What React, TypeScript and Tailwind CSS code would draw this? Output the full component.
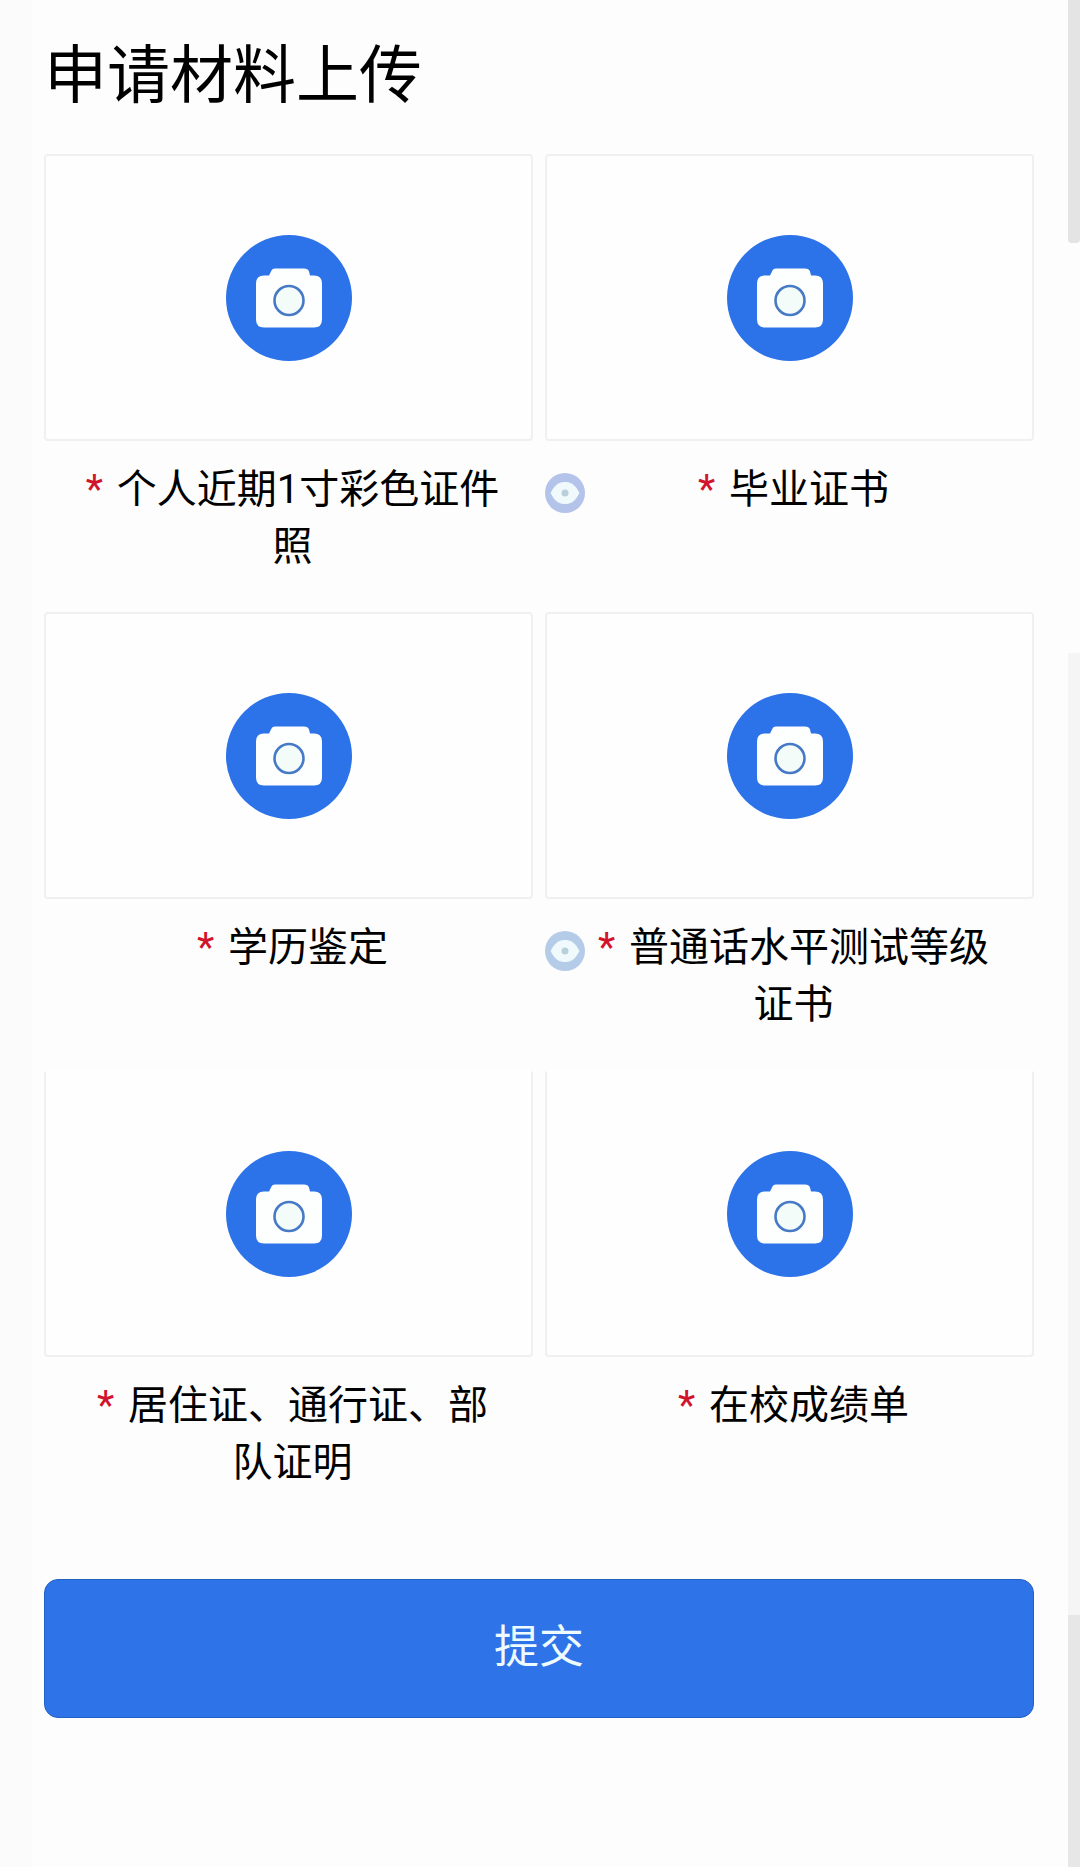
import React from 'react';

type Material = { id: string; name: string; preview?: 'violet' | 'blue' };

const rows: Material[][] = [
  [
    { id: 'photo', name: '个人近期1寸彩色证件照' },
    { id: 'diploma', name: '毕业证书', preview: 'violet' },
  ],
  [
    { id: 'education', name: '学历鉴定' },
    { id: 'mandarin', name: '普通话水平测试等级证书', preview: 'blue' },
  ],
  [
    { id: 'residence', name: '居住证、通行证、部队证明' },
    { id: 'transcript', name: '在校成绩单' },
  ],
];

function CameraIcon() {
  return (
    <svg viewBox="0 0 126 126" className="size-[126px]" aria-hidden="true">
      <circle cx="63" cy="63" r="63" fill="#2c72e8" />
      <path
        d="M49 33.500h29q4 0 5 3l1 4h4q8 0 8 8v36q0 8-8 8H38q-8 0-8-8V48.500q0-8 8-8h5l2-4q1-3 4-3z"
        fill="#fdfefe"
      />
      <circle cx="63" cy="65.500" r="14.500" fill="#f3fcf9" stroke="#4679c6" strokeWidth="2.600" />
    </svg>
  );
}

function EyeIcon({ tone }: { tone: 'violet' | 'blue' }) {
  return (
    <svg viewBox="0 0 40 40" className="size-10" aria-hidden="true">
      <circle cx="20" cy="20" r="20" fill={tone === 'violet' ? '#b4c3ea' : '#b5cce9'} />
      <path d="M6 20C9 15 11 9.500 20 9.500S31 15 34 20c-3 5-5 10.500-14 10.500S9 25 6 20z" fill="#f0fafd" stroke="#f0fafd" strokeLinejoin="round" />
      <circle cx="20" cy="20" r="3.500" fill="#b9cfda" />
    </svg>
  );
}

function UploadItem({ item, openTop }: { item: Material; openTop: boolean }) {
  return (
    <div className="relative">
      <input id={item.id} type="file" accept="image/*" className="sr-only" />
      <label
        htmlFor={item.id}
        aria-label={`上传${item.name}`}
        className={`flex h-[287px] cursor-pointer items-center justify-center rounded-sm border-2 bg-[#fefefe] ${
          openTop ? 'border-[#f0f0f0] border-t-transparent' : 'border-[#f0f0f0]'
        }`}
      >
        <CameraIcon />
      </label>
      <div className="relative mt-5 min-h-[114px] pr-[30px] pl-[38px] text-center text-[40px] leading-[57px]">
        {item.preview && (
          <button type="button" aria-label={`查看${item.name}示例`} className="absolute top-3 left-0 size-10">
            <EyeIcon tone={item.preview} />
          </button>
        )}
        <label htmlFor={item.id}>
          <span className="mr-1 text-[#d0142c]">*</span> {item.name}
        </label>
      </div>
    </div>
  );
}

export default function App() {
  return (
    <div className="flex min-h-screen bg-[#fbfbfb] pl-8 font-[Roboto,'Noto_Sans_CJK_SC',sans-serif] text-black">
      <main className="min-w-0 flex-1 bg-[#fdfdfd] pt-8 pr-[34px] pb-[148px] pl-3">
        <h1 className="text-[63px] leading-[88px]">申请材料上传</h1>
        <form onSubmit={(e) => e.preventDefault()} className="mt-[34px]">
          <div className="flex flex-col gap-[37px]">
            {rows.map((row, i) => (
              <div key={row[0].id} className="grid grid-cols-2 gap-3">
                {row.map((item) => (
                  <UploadItem key={item.id} item={item} openTop={i === 2} />
                ))}
              </div>
            ))}
          </div>
          <button
            type="submit"
            className="mt-[88px] h-[139px] w-full rounded-[14px] border border-[#2460c0] bg-[#2f73e8] pb-0.5 text-[45px] text-[#eefbff]"
          >
            提交
          </button>
        </form>
      </main>
      <div className="flex w-3 flex-col" aria-hidden="true">
        <div className="h-[13%] rounded-b-sm bg-[#e4e4e4]" />
        <div className="flex-1 bg-[#fdfdfd]" />
        <div className="h-[51.500%] bg-[#f5f5f5]" />
        <div className="h-[13.500%] bg-[#e7e7e7]" />
      </div>
    </div>
  );
}
